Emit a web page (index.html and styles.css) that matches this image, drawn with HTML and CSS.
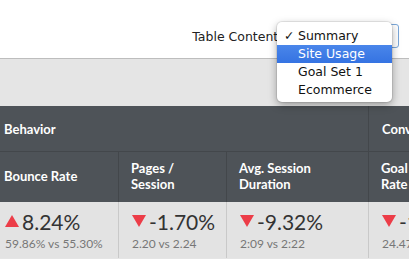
FILE: index.html
```html
<!DOCTYPE html>
<html>
<head>
  <title>Behavior Report</title>
  <link rel="stylesheet" href="styles.css">
</head>
<body>
  <div id="toolbar">
    <span class="label">Table Contents:</span>
    <div class="select"></div>
    <ul id="menu">
      <li><span class="check">✓</span>Summary</li>
      <li class="active">Site Usage</li>
      <li>Goal Set 1</li>
      <li>Ecommerce</li>
    </ul>
  </div>
  <div id="band"></div>

  <div id="report">
    <div class="group">Behavior</div>
    <div class="group last">Conversions</div>

    <div class="col first">Bounce Rate</div>
    <div class="col">Pages /<br>Session</div>
    <div class="col">Avg. Session<br>Duration</div>
    <div class="col last">Goal Conversion<br>Rate</div>

    <div class="cell first">
      <div class="value"><span class="tri up"></span>8.24%</div>
      <div class="compare">59.86% vs 55.30%</div>
    </div>
    <div class="cell">
      <div class="value"><span class="tri down"></span>-1.70%</div>
      <div class="compare">2.20 vs 2.24</div>
    </div>
    <div class="cell">
      <div class="value"><span class="tri down"></span>-9.32%</div>
      <div class="compare">2:09 vs 2:22</div>
    </div>
    <div class="cell last">
      <div class="value"><span class="tri down"></span>-11.04%</div>
      <div class="compare">24.47% vs 27.51%</div>
    </div>
  </div>
</body>
</html>
```

FILE: styles.css
```css
body {
  margin: 0;
  width: 409px;
  height: 259px;
  overflow: hidden;
  background: #e5e5e5;
  font-family: Lato, "Open Sans", sans-serif;
}
#toolbar {
  position: relative;
  height: 58px;
  background: white;
  border-bottom: 1px solid #bdbdbd;
  display: flex;
  justify-content: flex-end;
  align-items: flex-start;
  padding-right: 10px;
}
#toolbar .label {
  font-family: "DejaVu Sans", sans-serif;
  font-size: 12.5px;
  color: #222;
  margin-top: 29px;
  margin-right: 8px;
  white-space: nowrap;
}
#toolbar .select {
  width: 100px;
  height: 22px;
  margin-top: 24px;
  border: 1px solid #7aa7d9;
  border-radius: 3px;
  background: white;
}
#menu {
  position: absolute;
  left: 277px;
  top: 22px;
  width: 115px;
  margin: 0;
  padding: 5px 0 3px;
  list-style: none;
  background: white;
  border-radius: 5px;
  box-shadow: 0 3px 8px rgba(0,0,0,0.35), 0 0 0 1px rgba(0,0,0,0.08);
  font-family: "DejaVu Sans", sans-serif;
  font-size: 12.5px;
  color: #111;
  z-index: 2;
}
#menu li {
  height: 18px;
  line-height: 18px;
  padding-left: 21px;
  position: relative;
}
#menu li.active {
  background: linear-gradient(#4a86ea, #3573e2);
  color: white;
}
#menu .check {
  position: absolute;
  left: 7px;
}
#band {
  height: 47px;
  background: #e5e5e5;
}
#report {
  display: grid;
  grid-template-columns: 118px 108px 142px 1fr;
  grid-template-rows: 46px 50px 56px;
  background: #4e5358;
  color: white;
}
.group {
  grid-column: span 3;
  display: flex;
  align-items: center;
  padding-left: 4px;
  font-size: 13px;
  font-weight: bold;
  border-bottom: 1px solid #43474b;
  white-space: nowrap;
}
.group.last {
  grid-column: span 1;
  padding-left: 13px;
  border-left: 1px solid #43474b;
}
.col {
  display: flex;
  align-items: center;
  padding-left: 12px;
  font-size: 13px;
  font-weight: bold;
  line-height: 15.6px;
  border-left: 1px solid #43474b;
  white-space: nowrap;
  overflow: hidden;
}
.col.first {
  padding-left: 4px;
  border-left: none;
}
.cell {
  background: #e3e3e3;
  border-left: 1px solid #c9c9c9;
  padding: 7px 0 0 13px;
  white-space: nowrap;
  overflow: hidden;
}
.cell.first {
  border-left: none;
  padding-left: 5px;
}
.value {
  display: flex;
  align-items: center;
  font-size: 21px;
  color: #333;
  height: 24px;
}
.compare {
  font-size: 12px;
  color: #777;
  margin-top: 3px;
}
.tri {
  width: 0;
  height: 0;
  border-left: 7px solid transparent;
  border-right: 7px solid transparent;
  margin-right: 3px;
}
.tri.up {
  border-bottom: 12px solid #ec3d48;
}
.tri.down {
  border-top: 12px solid #ec3d48;
}
```
